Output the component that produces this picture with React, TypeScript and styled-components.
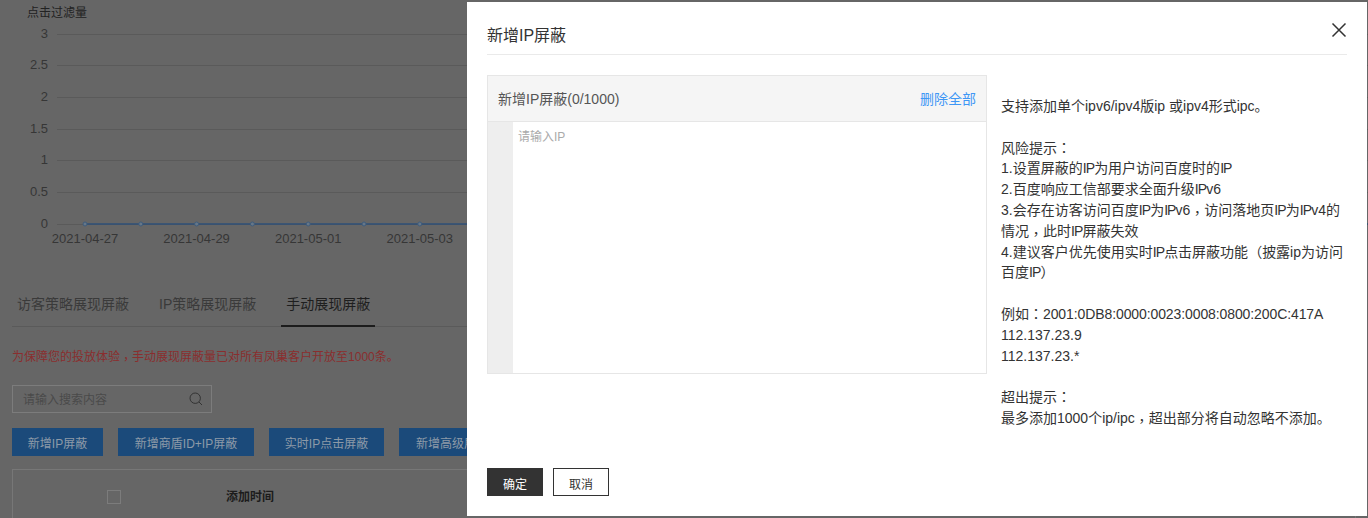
import styled, { createGlobalStyle } from "styled-components";

const GlobalStyle = createGlobalStyle`
  html, body {
    margin: 0;
    height: 518px;
    overflow: hidden;
    background: #666;
  }
  * {
    box-sizing: border-box;
  }
  body, input, textarea, button {
    font-family: "Liberation Sans", "Noto Sans CJK SC", sans-serif;
  }
`;

const Page = styled.div`
  width: 1368px;
  height: 518px;
  padding: 0 12px;
  overflow: hidden;
  background: #666;
  color: #2b2b2b;
`;

const ChartWrap = styled.div`
  margin: 0 -12px;
  height: 291px;

  svg {
    display: block;
  }
`;

const Tabs = styled.div`
  display: flex;
  gap: 20px;
  height: 36px;
  border-bottom: 1px solid #5a5a5a;
`;

const Tab = styled.div<{ $active?: boolean }>`
  height: 36px;
  padding: 0 5px;
  font-size: 14px;
  line-height: 26px;
  color: ${(p) => (p.$active ? "#1e1e1e" : "#3a3a3a")};
  border-bottom: 2px solid ${(p) => (p.$active ? "#1c1c1c" : "transparent")};
`;

const Notice = styled.div`
  margin-top: 20px;
  font-size: 12px;
  line-height: 20px;
  color: #8a2e2e;
`;

// colon and brackets sit in the middle of their box in the reference
const Punct = styled.span`
  font-family: "Noto Sans CJK TC", sans-serif;
  line-height: 0;
`;

// the comma is centred too, but lower down
const Comma = styled(Punct)`
  vertical-align: -3px;
`;

const Ip = styled.span`
  letter-spacing: -0.9px;
`;

const Address = styled.span`
  letter-spacing: -0.1px;
`;

const SearchBox = styled.div`
  display: flex;
  align-items: center;
  justify-content: space-between;
  width: 200px;
  height: 28px;
  margin-top: 18px;
  padding: 0 8px 0 10px;
  border: 1px solid #7c7c7c;

  input {
    width: 150px;
    height: 18px;
    border: none;
    outline: none;
    padding: 2px 0 0;
    background: transparent;
    font-size: 12px;
  }
  input::placeholder {
    color: #4a4a4a;
    opacity: 1;
  }
`;

const Toolbar = styled.div`
  display: flex;
  gap: 15px;
  margin-top: 15px;
`;

const BlueButton = styled.button<{ $width: number }>`
  flex: none;
  width: ${(p) => p.$width}px;
  height: 28px;
  padding: 0;
  border: none;
  background: #1b4a7a;
  color: #8d9aa8;
  font-size: 12px;
  white-space: nowrap;
`;

const Table = styled.div`
  display: grid;
  grid-template-columns: 202px 70px 1fr;
  align-items: center;
  width: 1344px;
  height: 60px;
  margin-top: 13px;
  padding-bottom: 6px;
  border: 1px solid #777;
`;

const CheckCell = styled.div`
  display: flex;
  justify-content: center;
  margin-top: 2px;
`;

const FakeCheck = styled.span`
  width: 14px;
  height: 14px;
  border: 1px solid #7c7c7c;
`;

const HeadCell = styled.div`
  text-align: center;
  font-size: 12px;
  font-weight: 700;
  color: #1c1c1c;
  margin-top: -2px;
`;

const Drawer = styled.div`
  position: fixed;
  top: 2px;
  left: 467px;
  width: 900px;
  height: 514px;
  display: flex;
  flex-direction: column;
  padding: 0 20px 20px;
  background: #fff;
  color: #333;
`;

const DrawerHead = styled.div`
  flex: none;
  display: flex;
  align-items: center;
  justify-content: space-between;
  height: 53px;
  padding-top: 12px;
  border-bottom: 1px solid #eaeaea;
  font-size: 16px;
  color: #333;

  svg {
    margin-top: -8px;
  }
`;

const DrawerBody = styled.div`
  flex: 1;
  display: flex;
  gap: 14px;
  padding-top: 20px;
`;

const IpPanel = styled.div`
  width: 500px;
  height: 299px;
  display: flex;
  flex-direction: column;
  border: 1px solid #e6e6e6;
`;

const PanelHead = styled.div`
  flex: none;
  display: flex;
  align-items: center;
  justify-content: space-between;
  height: 46px;
  padding: 0 10px 2px;
  background: #f5f5f5;
  border-bottom: 1px solid #e6e6e6;
  font-size: 14px;
  color: #555;
`;

const ClearLink = styled.a`
  color: #3f97f5;
`;

const Editor = styled.div`
  flex: 1;
  display: flex;
`;

const Gutter = styled.div`
  width: 25px;
  background: #eee;
`;

const IpInput = styled.textarea`
  flex: 1;
  padding: 7px 5px;
  border: none;
  outline: none;
  resize: none;
  font-size: 12px;
  line-height: 16px;

  &::placeholder {
    color: #aaa;
    opacity: 1;
  }
`;

const Help = styled.div`
  padding-top: 21px;
  font-size: 14px;
  line-height: 20.8px;
  white-space: nowrap;
  color: #333;
`;

const HelpGap = styled.div`
  height: 20.8px;
`;

const Footer = styled.div`
  flex: none;
  display: flex;
  gap: 10px;
`;

const FootButton = styled.button<{ $primary?: boolean }>`
  width: 56px;
  height: 28px;
  padding: 2px 0 0;
  border: 1px solid #333;
  background: ${(p) => (p.$primary ? "#333" : "#fff")};
  color: ${(p) => (p.$primary ? "#fff" : "#333")};
  font-size: 12px;
`;

const yTicks = [
  { label: "3", y: 34 },
  { label: "2.5", y: 65 },
  { label: "2", y: 97 },
  { label: "1.5", y: 129 },
  { label: "1", y: 160 },
  { label: "0.5", y: 192 },
  { label: "0", y: 224 },
];

const dates = ["2021-04-27", "2021-04-29", "2021-05-01", "2021-05-03"];
const points = [85, 140.8, 196.6, 252.4, 308.2, 364, 419.8, 475.6];

function FilterChart() {
  return (
    <ChartWrap>
      <svg width="1368" height="262" fontFamily='"Liberation Sans", "Noto Sans CJK SC", sans-serif'>
        <text x="27" y="17" fontSize="12" fill="#222">点击过滤量</text>
        {yTicks.map((t) => (
          <g key={t.label}>
            <line x1="57" x2="1368" y1={t.y + 0.5} y2={t.y + 0.5} stroke="#5a5a5a" />
            <text x="48" y={t.y + 3.5} fontSize="13" textAnchor="end" fill="#363636">{t.label}</text>
          </g>
        ))}
        <line x1="85" x2="1368" y1="224" y2="224" stroke="#2f5179" strokeWidth="1.5" />
        {points.map((x) => (
          <circle key={x} cx={x} cy="224" r="2" fill="#667788" stroke="#3f5c7c" />
        ))}
        {dates.map((d, i) => (
          <text key={d} x={85 + i * 111.6} y="242.5" fontSize="13" textAnchor="middle" fill="#363636">{d}</text>
        ))}
      </svg>
    </ChartWrap>
  );
}

export default function App() {
  return (
    <>
      <GlobalStyle />
      <Page>
        <FilterChart />
        <Tabs>
          <Tab>访客策略展现屏蔽</Tab>
          <Tab>IP策略展现屏蔽</Tab>
          <Tab $active>手动展现屏蔽</Tab>
        </Tabs>
        <Notice>为保障您的投放体验<Comma>，</Comma>手动展现屏蔽量已对所有凤巢客户开放至1000条。</Notice>
        <SearchBox>
          <input placeholder="请输入搜索内容" />
          <svg width="14" height="14" viewBox="0 0 14 14" fill="none" stroke="#333" strokeWidth="1">
            <circle cx="6.2" cy="6.2" r="5.2" />
            <path d="M10 10l3 3" />
          </svg>
        </SearchBox>
        <Toolbar>
          <BlueButton $width={91}>新增IP屏蔽</BlueButton>
          <BlueButton $width={136}>新增商盾ID+IP屏蔽</BlueButton>
          <BlueButton $width={115}>实时IP点击屏蔽</BlueButton>
          <BlueButton $width={130}>新增高级展现屏蔽</BlueButton>
        </Toolbar>
        <Table>
          <CheckCell><FakeCheck /></CheckCell>
          <HeadCell>添加时间</HeadCell>
        </Table>
      </Page>
      <Drawer>
        <DrawerHead>
          新增IP屏蔽
          <svg width="16" height="16" viewBox="0 0 16 16" stroke="#333" strokeWidth="1.5" fill="none">
            <path d="M1.5 1.5l13 13M14.5 1.5l-13 13" />
          </svg>
        </DrawerHead>
        <DrawerBody>
          <IpPanel>
            <PanelHead>
              新增IP屏蔽(0/1000)
              <ClearLink>删除全部</ClearLink>
            </PanelHead>
            <Editor>
              <Gutter />
              <IpInput placeholder="请输入IP" />
            </Editor>
          </IpPanel>
          <Help>
            <div>支持添加单个ipv6/ipv4版ip 或ipv4形式ipc。</div>
            <HelpGap />
            <div>风险提示<Punct>：</Punct></div>
            <div>1.设置屏蔽的<Ip>IP</Ip>为用户访问百度时的<Ip>IP</Ip></div>
            <div>2.百度响应工信部要求全面升级<Ip>IP</Ip>v6</div>
            <div>3.会存在访客访问百度<Ip>IP</Ip>为<Ip>IP</Ip>v6<Comma>，</Comma>访问落地页<Ip>IP</Ip>为<Ip>IP</Ip>v4的</div>
            <div>情况<Comma>，</Comma>此时<Ip>IP</Ip>屏蔽失效</div>
            <div>4.建议客户优先使用实时<Ip>IP</Ip>点击屏蔽功能<Punct>（</Punct>披露ip为访问</div>
            <div>百度<Ip>IP</Ip><Punct>）</Punct></div>
            <HelpGap />
            <div>例如<Punct>：</Punct><Address>2001:0DB8:0000:0023:0008:0800:200C:417A</Address></div>
            <div>112.137.23.9</div>
            <div>112.137.23.*</div>
            <HelpGap />
            <div>超出提示<Punct>：</Punct></div>
            <div>最多添加1000个ip/ipc<Comma>，</Comma>超出部分将自动忽略不添加。</div>
          </Help>
        </DrawerBody>
        <Footer>
          <FootButton $primary>确定</FootButton>
          <FootButton>取消</FootButton>
        </Footer>
      </Drawer>
    </>
  );
}
